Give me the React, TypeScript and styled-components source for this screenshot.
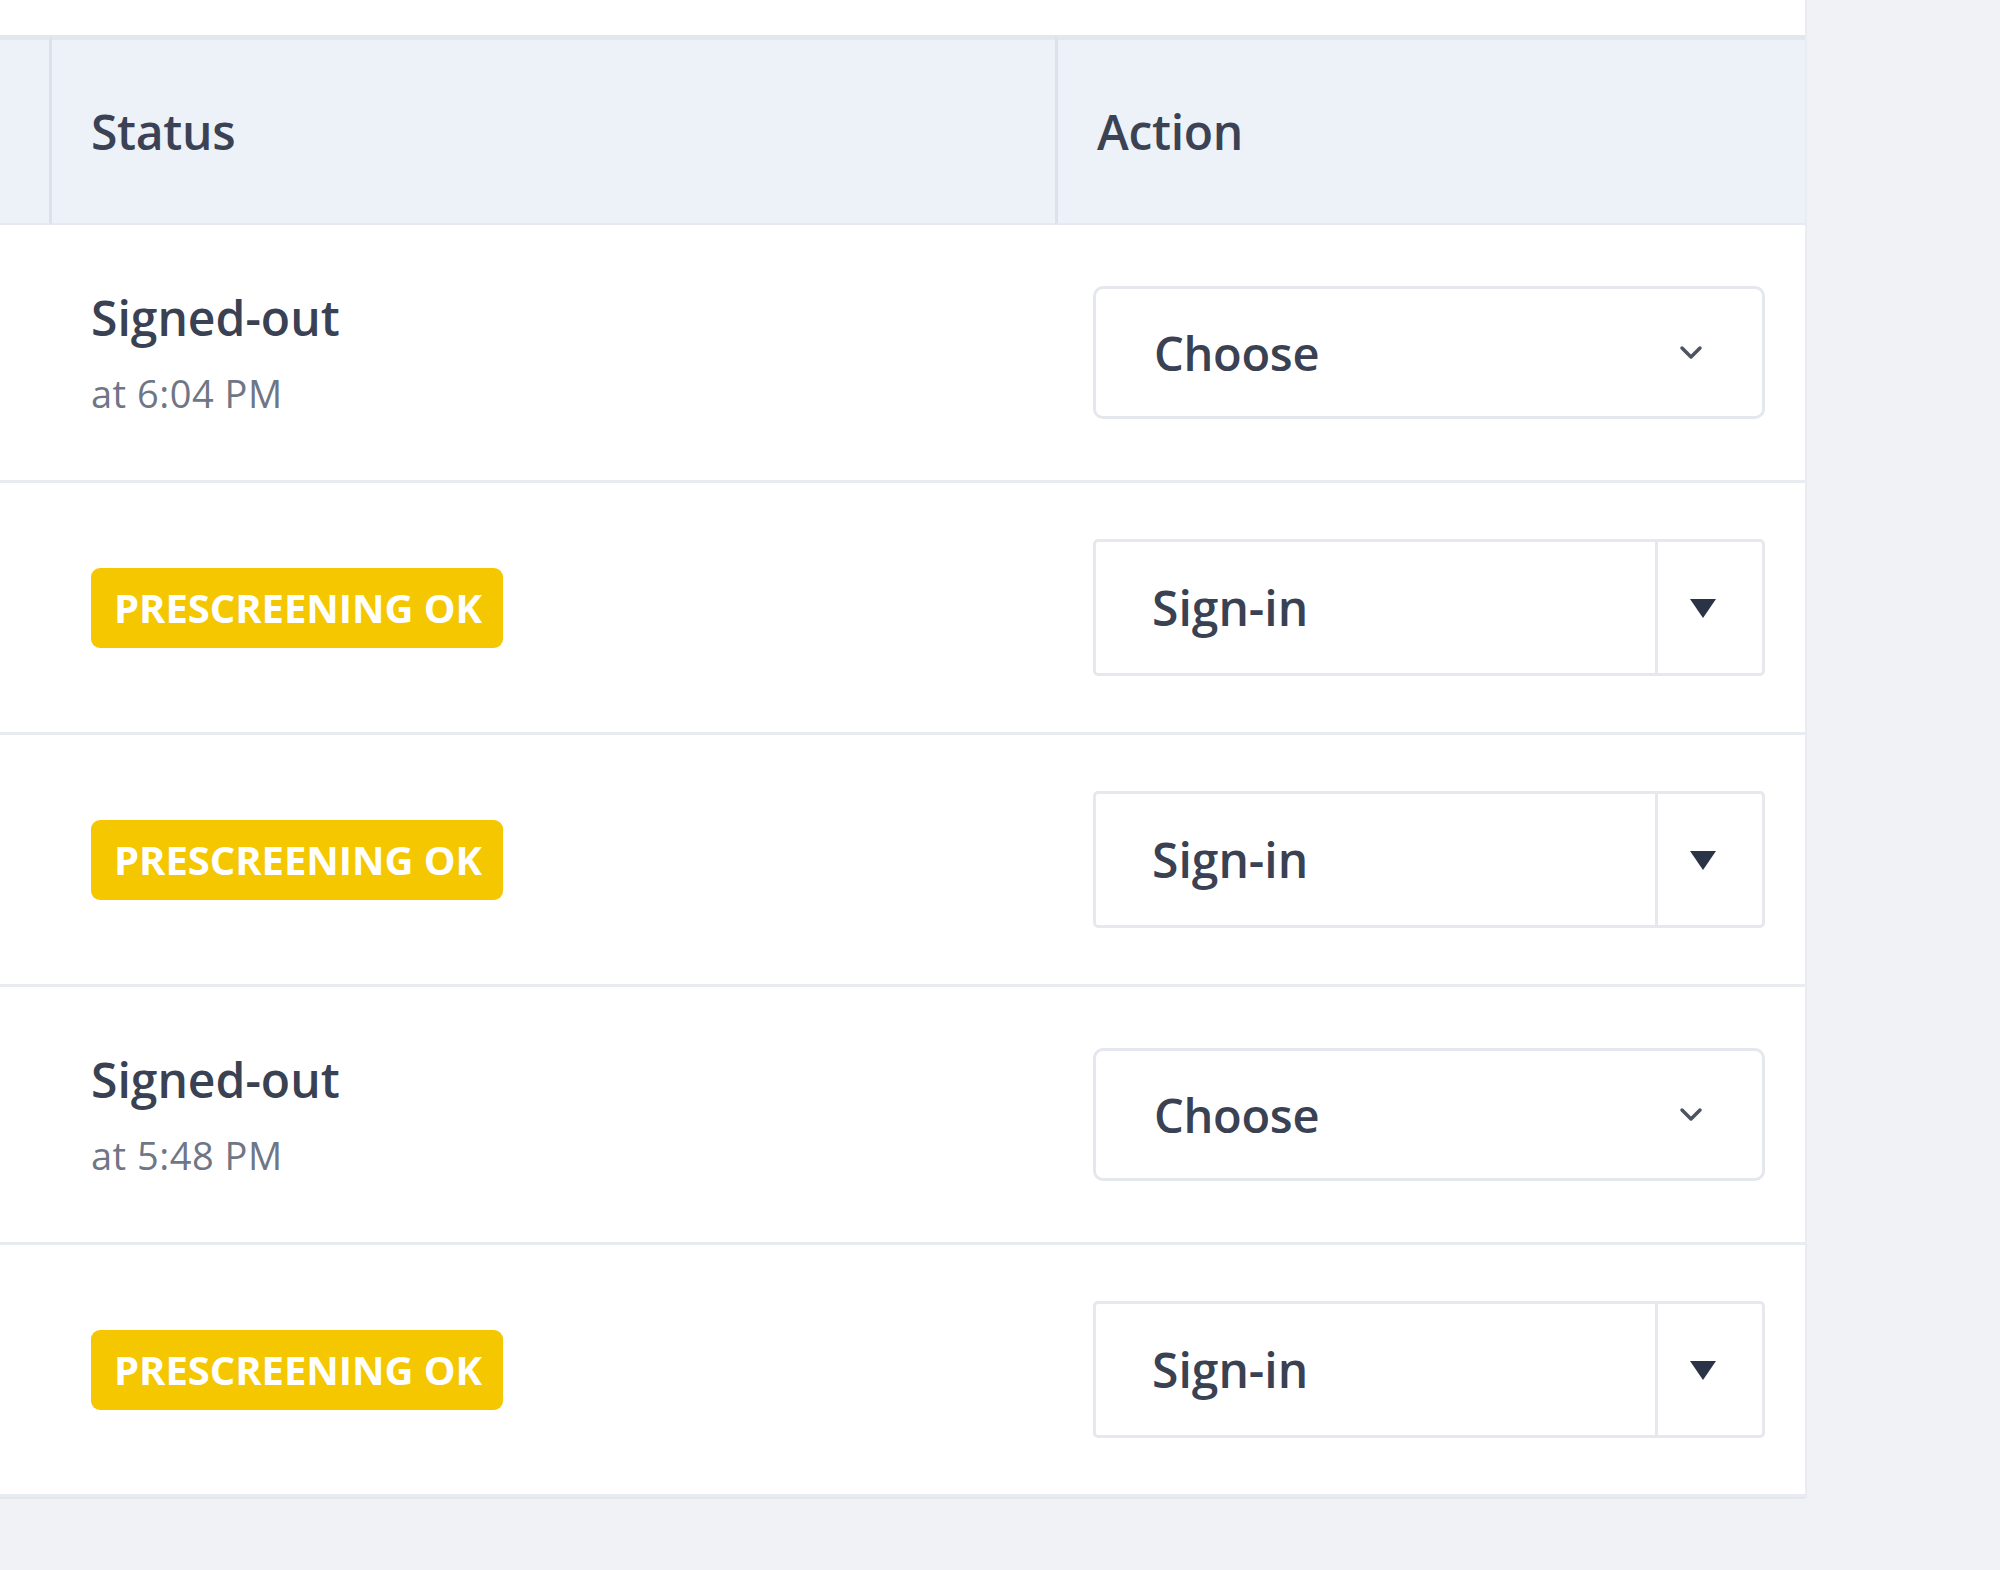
import React from "react";
import styled, { createGlobalStyle } from "styled-components";

const Global = createGlobalStyle`
  html, body { margin: 0; padding: 0; }
  body {
    background: #f1f2f6;
    font-family: "Open Sans", "Noto Sans", sans-serif;
    color: #394152;
    min-height: 1570px;
  }
`;

const Card = styled.div`
  width: 1805px;
  background: #ffffff;
  padding-top: 35px;
  box-shadow: 2px 0 0 #e9ecf1;
  border-bottom: 2px solid #e4e7ed;
`;

const Grid = styled.div`
  display: grid;
  grid-template-columns: 52px 1003px 750px;
`;

const HeadCell = styled.div<{ $first?: boolean }>`
  height: 183px;
  background: #edf1f8;
  border-top: 5px solid #e2e6ed;
  border-bottom: 2px solid #e6e9f0;
  border-right: ${(p) => (p.$first ? "3px solid #dde2ea" : "0")};
  padding-left: ${(p) => (p.$first ? "0" : "39px")};
  display: flex;
  align-items: center;
  font-size: 48px;
  font-weight: 600;
  color: #3a4254;
  letter-spacing: -0.3px;
`;

const ActionHead = styled(HeadCell)`
  border-left: 3px solid #dde2ea;
  padding-left: 39px;
`;

const BodyCell = styled.div<{ $pad: number }>`
  border-bottom: 3px solid #e8ebf0;
  padding: ${(p) => p.$pad}px 0;
  display: flex;
  align-items: center;
`;

const StatusCell = styled(BodyCell)`
  padding-left: 39px;
`;

const ActionCell = styled(BodyCell)`
  padding-left: 38px;
  padding-right: 40px;
`;

const StatusStack = styled.div`
  display: flex;
  flex-direction: column;
  gap: 12px;
`;

const StatusTitle = styled.div`
  font-size: 48px;
  line-height: 70px;
  font-weight: 600;
  color: #394152;
  letter-spacing: 0;
`;

const StatusTime = styled.div`
  font-size: 38px;
  line-height: 57px;
  color: #6f7685;
  letter-spacing: 0.5px;
`;

const Badge = styled.span`
  display: inline-flex;
  align-items: center;
  height: 80px;
  padding: 0 21px 0 23px;
  border-radius: 9px;
  background: #f4c700;
  color: #ffffff;
  font-size: 40px;
  font-weight: 700;
  letter-spacing: -0.05px;
`;

const Select = styled.div`
  flex: 1;
  height: 133px;
  box-sizing: border-box;
  border: 3px solid #e4e7ed;
  border-radius: 10px;
  display: flex;
  align-items: center;
  justify-content: space-between;
  padding: 0 56px 0 58px;
  font-size: 47px;
  font-weight: 600;
  color: #394152;
  letter-spacing: -0.3px;
`;

const Split = styled.div`
  flex: 1;
  height: 137px;
  box-sizing: border-box;
  border: 3px solid #e6e8ed;
  border-radius: 5px;
  display: grid;
  grid-template-columns: 1fr 107px;
`;

const SplitMain = styled.div`
  display: flex;
  align-items: center;
  padding-left: 56px;
  font-size: 48px;
  font-weight: 600;
  color: #394152;
  letter-spacing: 0;
`;

const SplitCaret = styled.div`
  border-left: 3px solid #e6e8ed;
  display: flex;
  align-items: center;
  justify-content: center;
  padding-right: 14px;
`;

const Chevron = () => (
  <svg width="30" height="18" viewBox="0 0 30 18">
    <polyline points="6,4 15,13 24,4" fill="none" stroke="#4d5361" strokeWidth="3.5" strokeLinecap="round" strokeLinejoin="round" />
  </svg>
);

const Caret = () => (
  <svg width="28" height="22" viewBox="0 0 28 22">
    <polygon points="1,2 27,2 14,21" fill="#2b3346" />
  </svg>
);

type Row =
  | { kind: "out"; time: string }
  | { kind: "ok" };

const rows: Row[] = [
  { kind: "out", time: "at 6:04 PM" },
  { kind: "ok" },
  { kind: "ok" },
  { kind: "out", time: "at 5:48 PM" },
  { kind: "ok" },
];

export default function App() {
  return (
    <>
      <Global />
      <Card>
        <Grid>
          <HeadCell $first />
          <HeadCell>Status</HeadCell>
          <ActionHead>Action</ActionHead>
          {rows.map((r, i) => {
            const pad = r.kind === "out" ? 58 : 56;
            return (
              <React.Fragment key={i}>
                <BodyCell $pad={pad} />
                <StatusCell $pad={pad}>
                  {r.kind === "out" ? (
                    <StatusStack>
                      <StatusTitle>Signed-out</StatusTitle>
                      <StatusTime>{r.time}</StatusTime>
                    </StatusStack>
                  ) : (
                    <Badge>PRESCREENING OK</Badge>
                  )}
                </StatusCell>
                <ActionCell $pad={pad}>
                  {r.kind === "out" ? (
                    <Select>
                      <span>Choose</span>
                      <Chevron />
                    </Select>
                  ) : (
                    <Split>
                      <SplitMain>Sign-in</SplitMain>
                      <SplitCaret>
                        <Caret />
                      </SplitCaret>
                    </Split>
                  )}
                </ActionCell>
              </React.Fragment>
            );
          })}
        </Grid>
      </Card>
    </>
  );
}
